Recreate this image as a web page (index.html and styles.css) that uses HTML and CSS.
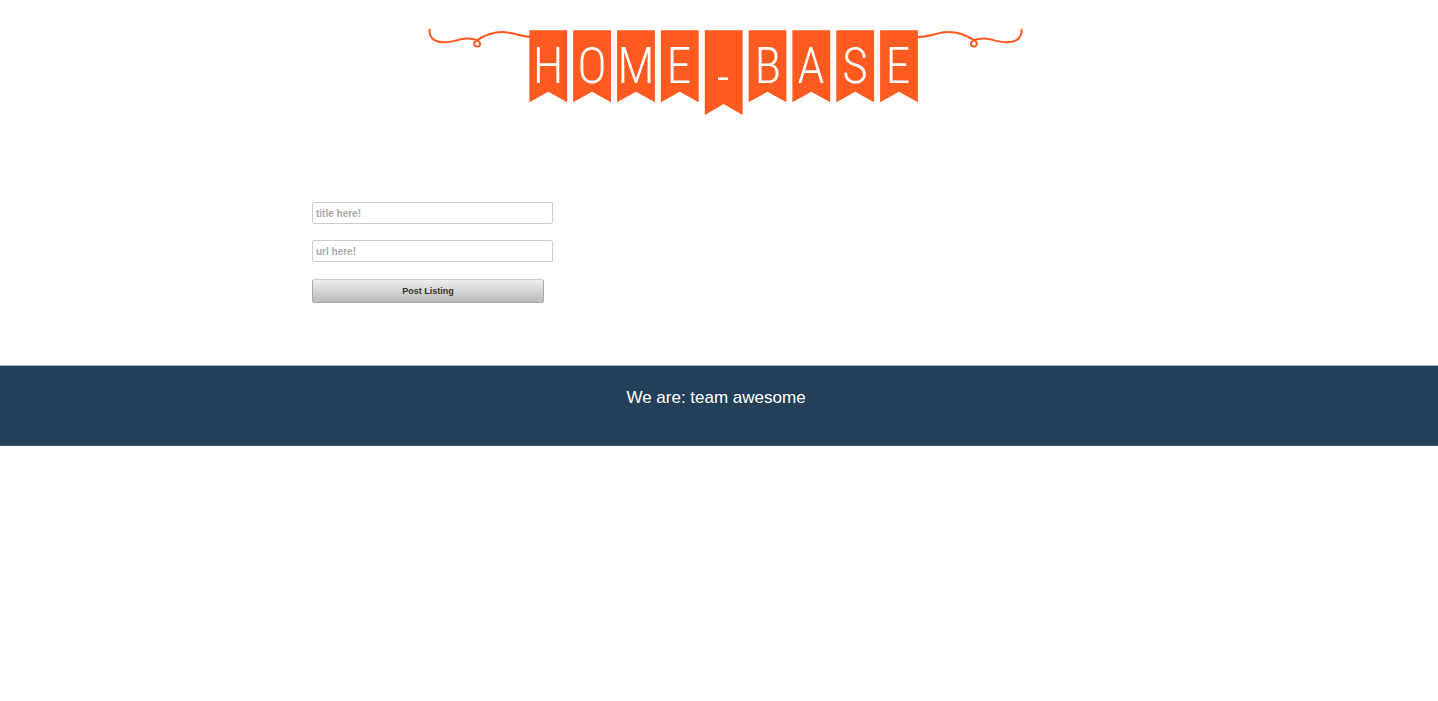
FILE: index.html
```html
<!DOCTYPE html>
<html lang="en">
<head>
<meta charset="utf-8">
<title>Home-Base</title>
<link rel="stylesheet" href="styles.css">
</head>
<body>
<header class="site-header">
  <svg class="logo" viewBox="0 0 596 88" role="img" aria-label="Home-Base">
    <defs>
      <path id="pennant" d="M0 0H37.8V72L18.9 61.5L0 72Z"/>
      <path id="swirl" d="M1.5 1.8C1 10 6.500 14.300 16.500 14.300C28 14.300 37 7.500 49 12.200C53.500 14.500 52.500 18.500 49.200 18.500C45.500 18.500 45 14 49 12.200C58 6.500 66 4.100 74 4.100C87 4.100 92 9.500 106 9"/>
    </defs>
    <use href="#swirl" class="swirl"/>
    <use href="#swirl" class="swirl" transform="translate(595 0) scale(-1 1)"/>
    <g class="pennants">
      <use href="#pennant" x="101.400" y="2.300"/>
      <use href="#pennant" x="145.200" y="2.300"/>
      <use href="#pennant" x="189.100" y="2.300"/>
      <use href="#pennant" x="232.900" y="2.300"/>
      <path d="M276.800 2.300H314.600V87L295.700 76L276.800 87Z"/>
      <use href="#pennant" x="320.600" y="2.300"/>
      <use href="#pennant" x="364.400" y="2.300"/>
      <use href="#pennant" x="408.300" y="2.300"/>
      <use href="#pennant" x="452.100" y="2.300"/>
    </g>
    <g class="letters">
      <text x="120" y="55">H</text>
      <text x="164" y="55">O</text>
      <text x="208" y="55">M</text>
      <text x="251" y="55">E</text>
      <text x="295" y="66">-</text>
      <text x="340" y="55">B</text>
      <text x="383" y="55">A</text>
      <text x="427" y="55">S</text>
      <text x="470" y="55">E</text>
    </g>
  </svg>
</header>
<main class="content">
  <form class="listing-form">
    <input class="field" type="text" name="title" placeholder="title here!" aria-label="Title">
    <input class="field" type="text" name="url" placeholder="url here!" aria-label="URL">
    <button class="post-button" type="submit">Post Listing</button>
  </form>
</main>
<footer class="site-footer">
  <p class="credit">We are: team awesome</p>
</footer>
</body>
</html>
```

FILE: styles.css
```css
* {
  box-sizing: border-box;
}

body {
  margin: 0;
  background: #fff;
  font-family: "Liberation Sans", Arial, sans-serif;
}

.site-header {
  display: flex;
  justify-content: center;
  padding: 28px 0 0 14px;
}

.logo {
  display: block;
  width: 596px;
  max-width: 100%;
}

.swirl {
  fill: none;
  stroke: #ff5a1f;
  stroke-width: 2;
  stroke-linecap: round;
}

.pennants {
  fill: #ff5a1f;
}

.letters {
  fill: #fff;
  font-family: "Roboto Condensed", Lato, sans-serif;
  font-size: 50px;
  font-weight: 300;
  text-anchor: middle;
}

.content {
  width: 100%;
  max-width: 814px;
  margin: 0 auto;
  padding: 86px 0 62px;
}

.listing-form {
  display: flex;
  flex-direction: column;
  align-items: flex-start;
  gap: 16px;
}

.field {
  width: 241px;
  height: 22px;
  padding: 0 3px;
  border: 1px solid #ccc;
  border-radius: 2px;
  background: #fff;
  color: #333;
  font: bold 10px "Liberation Sans", Arial, sans-serif;
}

.field::placeholder {
  color: #aaa;
  opacity: 1;
}

.post-button {
  width: 232px;
  height: 24px;
  margin-top: 1px;
  padding: 0;
  border: 1px solid #aaa;
  border-top-color: #ccc;
  border-radius: 3px;
  background: linear-gradient(#eee, #bbb);
  color: #333;
  font: bold 9px "Liberation Sans", Arial, sans-serif;
}

.site-footer {
  min-height: 81px;
  padding: 22px 6px 0 0;
  border-top: 1px solid #a9bcc4;
  border-bottom: 1px solid #35587a;
  background: #243f58;
  color: #fff;
  text-align: center;
}

.credit {
  margin: 0;
  font-size: 17px;
  line-height: 20px;
}
```
